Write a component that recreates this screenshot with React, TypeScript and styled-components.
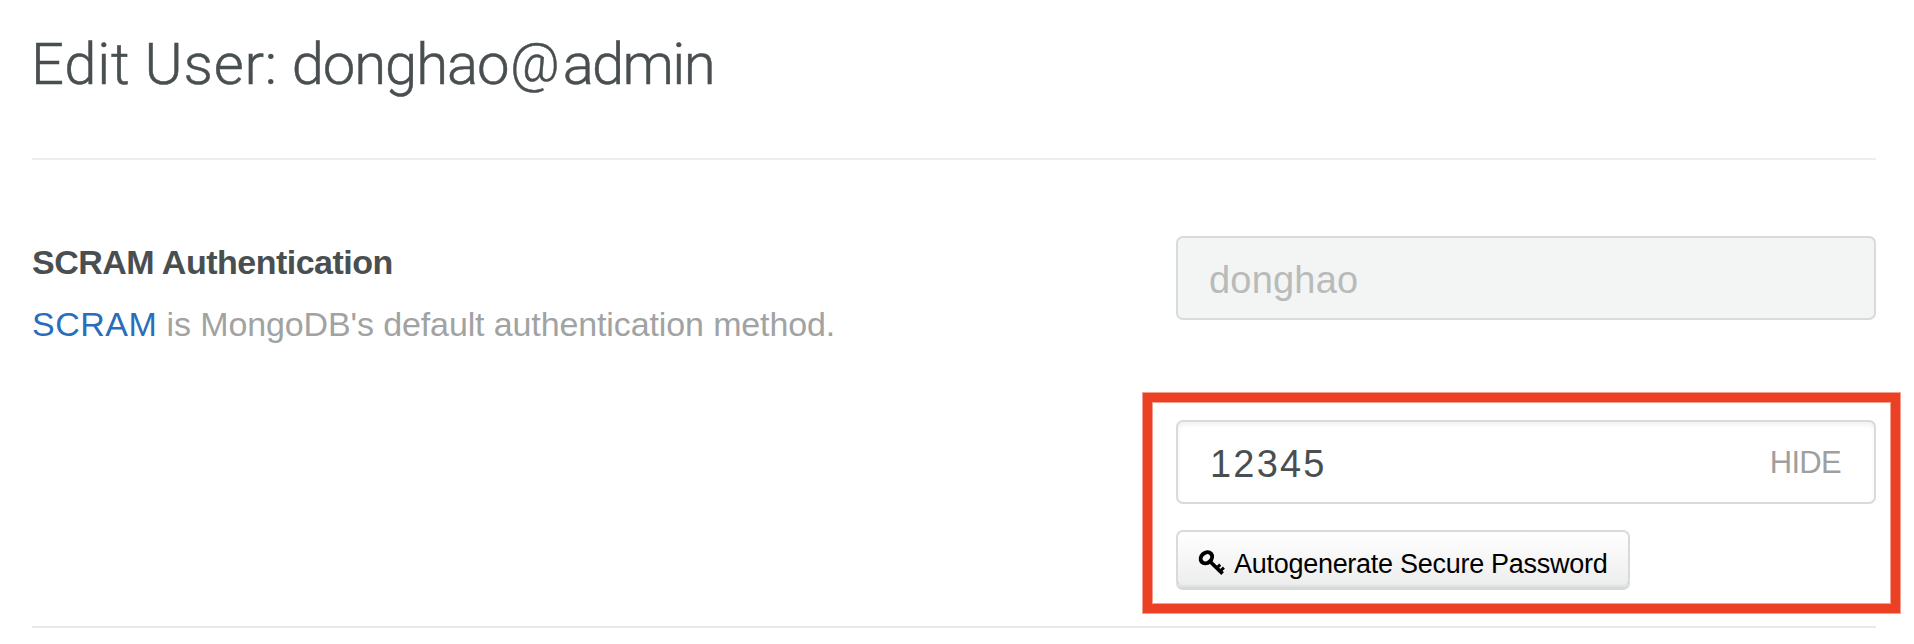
import React from "react";
import styled, { createGlobalStyle } from "styled-components";

const GlobalStyle = createGlobalStyle`
  *, *::before, *::after { box-sizing: border-box; }
  body {
    margin: 0;
    background: #fff;
    color: #494f51;
    font-family: "Liberation Sans", Arial, sans-serif;
  }
`;

const Page = styled.main`
  width: 1914px;
  height: 644px;
  padding: 0 38px 0 32px;
  overflow: hidden;
`;

const Header = styled.header`
  height: 160px;
  padding: 34px 0 0;
  border-bottom: 2px solid #ededed;
`;

const Title = styled.h1`
  margin: 0 0 0 -1px;
  font: 300 58px/60px Roboto, sans-serif;
  letter-spacing: 0.8px;
  word-spacing: -1px;
  white-space: nowrap;
  -webkit-text-stroke: 0.5px currentColor;
`;

const NamePart = styled.span<{ $spacing: number }>`
  letter-spacing: ${(p) => p.$spacing}px;
`;

const AtSign = styled.span`
  display: inline-block;
  margin: 0 3px 0 2px;
  font-size: 54px;
  line-height: 40px;
  letter-spacing: 0;
  vertical-align: 3px;
`;

const Section = styled.section`
  display: grid;
  grid-template-columns: 1fr 700px;
  padding: 76px 0 13px;
  border-bottom: 2px solid #e9e9e9;
`;

const Info = styled.div`
  padding-top: 6px;
`;

const SectionTitle = styled.h2`
  margin: 0 0 22px;
  font-size: 34px;
  line-height: 40px;
  letter-spacing: -0.5px;
`;

const Description = styled.p`
  margin: 0;
  color: #a1a3a3;
  font-size: 34px;
  line-height: 40px;
  letter-spacing: -0.12px;
  white-space: nowrap;
`;

const DocLink = styled.a`
  color: #2a6ebb;
  letter-spacing: 0.5px;
  text-decoration: none;
`;

const Field = styled.div<{ $disabled?: boolean }>`
  display: flex;
  align-items: center;
  justify-content: space-between;
  height: 84px;
  padding: 3px 33px 0 31px;
  border: 2px solid #d7dbda;
  border-radius: 7px;
  background: ${(p) => (p.$disabled ? "#f3f5f4" : "#fff")};
  color: ${(p) => (p.$disabled ? "#b9bbbb" : "#494f51")};
  box-shadow: ${(p) => (p.$disabled ? "none" : "inset 0 3px 4px rgba(0, 0, 0, 0.06)")};
`;

const Value = styled.span<{ $spacing: number }>`
  font-size: 38px;
  line-height: 44px;
  letter-spacing: ${(p) => p.$spacing}px;
`;

const Password = styled(Value)`
  margin-left: 1px;
`;

const Toggle = styled.span`
  margin-top: -2px;
  color: #9f9f9f;
  font-size: 31px;
  line-height: 36px;
  letter-spacing: -0.7px;
`;

const Highlight = styled.div`
  margin: 73px -24px 0 -33px;
  padding: 18px 15px 17px 24px;
  border: 9px solid #ec4024;
  box-shadow: 0 0 0 1px rgba(236, 64, 36, 0.5), inset 0 0 0 1px rgba(236, 64, 36, 0.5);
`;

const Button = styled.button`
  display: flex;
  align-items: flex-start;
  gap: 8px;
  width: 454px;
  height: 57px;
  margin: 26px 0 0;
  padding: 17px 0 0 20px;
  border: 2px solid #d7dbda;
  border-bottom-color: #dfe3e2;
  border-radius: 7px;
  background: linear-gradient(#fff, #ededed);
  box-shadow: 0 3px 0 #d6dad9;
  color: #000;
  font: 27px/31px "Liberation Sans", Arial, sans-serif;
  letter-spacing: -0.28px;
  white-space: nowrap;
`;

const KeyGlyph = styled.svg`
  flex: none;
`;

function KeyIcon() {
  return (
    <KeyGlyph width="28" height="28" viewBox="0 0 28 28" fill="none" stroke="#000">
      <ellipse cx="8.4" cy="8.8" rx="6.2" ry="5" transform="rotate(-42 8.4 8.8)" strokeWidth="4" />
      <path d="M11.5 12L24.6 24.6" strokeWidth="3.8" />
      <path d="M18.6 19.2L22.2 15.6M22 22.3L25.9 18.6" strokeWidth="2.9" />
    </KeyGlyph>
  );
}

export default function App() {
  return (
    <>
      <GlobalStyle />
      <Page>
        <Header>
          <Title>
            Edit User: <NamePart $spacing={-1.1}>donghao</NamePart>
            <AtSign>@</AtSign>
            <NamePart $spacing={-1.7}>admin</NamePart>
          </Title>
        </Header>
        <Section>
          <Info>
            <SectionTitle>SCRAM Authentication</SectionTitle>
            <Description>
              <DocLink>SCRAM</DocLink> is MongoDB's default authentication method.
            </Description>
          </Info>
          <div>
            <Field $disabled>
              <Value $spacing={0.2}>donghao</Value>
            </Field>
            <Highlight>
              <Field>
                <Password $spacing={2.2}>12345</Password>
                <Toggle>HIDE</Toggle>
              </Field>
              <Button type="button">
                <KeyIcon />
                Autogenerate Secure Password
              </Button>
            </Highlight>
          </div>
        </Section>
      </Page>
    </>
  );
}
